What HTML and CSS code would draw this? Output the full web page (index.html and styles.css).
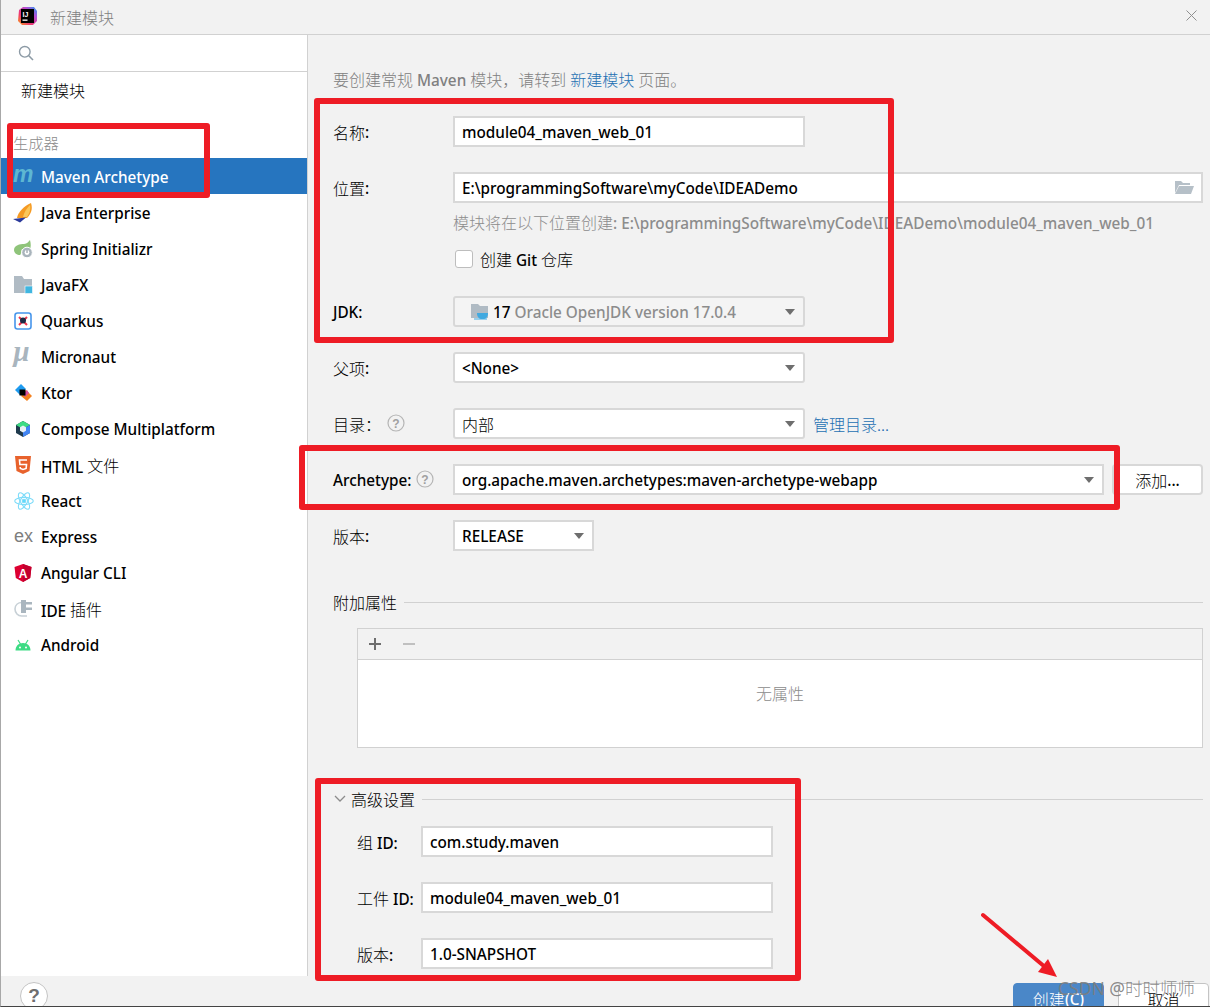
FILE: index.html
```html
<!DOCTYPE html>
<html lang="zh-CN">
<head>
<meta charset="utf-8">
<title>新建模块</title>
<link rel="stylesheet" href="styles.css">
</head>
<body>
<div class="window">
  <header class="titlebar">
    <svg class="logo" viewBox="0 0 20 20" width="20" height="20">
      <defs>
        <linearGradient id="lg" x1="0" y1="1" x2="1" y2="0">
          <stop offset="0" stop-color="#f7a01c"/><stop offset=".35" stop-color="#f0366f"/><stop offset=".7" stop-color="#b34fd8"/><stop offset="1" stop-color="#1e9ef0"/>
        </linearGradient>
      </defs>
      <path d="M2 4 6 1h11l3 4v10l-4 4H5l-4-4z" fill="url(#lg)"/>
      <rect x="4" y="3" width="13" height="14" fill="#000"/>
      <text x="5.5" y="10.5" class="logo-text">IJ</text>
      <rect x="5.5" y="13.5" width="5" height="1.3" fill="#fff"/>
    </svg>
    <span class="zh title-text">新建模块</span>
    <svg class="close" viewBox="0 0 11 11" width="11" height="11"><path d="M.5.5l10 10M10.5.5l-10 10" stroke="#8f8f8f" fill="none"/></svg>
  </header>

  <div class="body">
    <aside class="sidebar">
      <div class="search">
        <svg viewBox="0 0 16 16" width="16" height="16"><circle cx="6.8" cy="6.8" r="5.3" fill="none" stroke="#8c9aa5" stroke-width="1.4"/><path d="M10.8 10.8l4.2 4.2" stroke="#8c9aa5" stroke-width="1.6"/></svg>
      </div>
      <div class="plain-item zh">新建模块</div>
      <div class="group-title zh">生成器</div>
      <ul class="list">
        <li class="item selected">
          <svg class="ico" viewBox="0 0 18 18"><text x="-1" y="14" class="ico-maven">m</text></svg>
          <span>Maven Archetype</span>
        </li>
        <li class="item">
          <svg class="ico" viewBox="0 0 18 18"><path d="M3 14C4 8 10 2 17-1c2 6 0 11-4 15z" fill="#f59a23"/><path d="M9 13C10 8 13 4 16 1c1 5-1 9-3 12z" fill="#fbc75a"/><path d="M-1 15l13-1.500-6 5z" fill="#2b3a9b"/></svg>
          <span>Java Enterprise</span>
        </li>
        <li class="item">
          <svg class="ico" viewBox="0 0 18 18"><path d="M0 10c0-5 6-6 10-6 3 0 5-3 6-4 1 4 1 7 0 9H8c-1 3-1 6-2 6-3 0-6-2-6-5z" fill="#8fc47a"/><circle cx="13" cy="12.500" r="5.300" fill="#a9b4bc" stroke="#fff"/><circle cx="13" cy="12.500" r="2.400" fill="#fff"/><path d="M13 10v3" stroke="#7c8a94"/></svg>
          <span>Spring Initializr</span>
        </li>
        <li class="item">
          <svg class="ico" viewBox="0 0 18 18"><path d="M0 0h8l2 3h8v14H0z" fill="#b0bbc4"/><rect x="11" y="10" width="7.500" height="7.500" fill="#40b6e0" stroke="#fff" stroke-width=".6"/></svg>
          <span>JavaFX</span>
        </li>
        <li class="item">
          <svg class="ico" viewBox="0 0 18 18"><rect x="1" y="1" width="16" height="16" rx="2.500" fill="#fff" stroke="#4695eb" stroke-width="1.600"/><path d="M5 5l8 8M13 5l-8 8" stroke="#f0364f" stroke-width="2"/><circle cx="9" cy="8.500" r="3" fill="#1e2a44"/></svg>
          <span>Quarkus</span>
        </li>
        <li class="item">
          <svg class="ico" viewBox="0 0 18 18"><text x="-1" y="13" class="ico-micro">µ</text></svg>
          <span>Micronaut</span>
        </li>
        <li class="item">
          <svg class="ico" viewBox="0 0 18 18"><path d="M1 6l6-6 5 5-6 6z" fill="#1e9bf0"/><path d="M7 12l5-6 6 6-5 5z" fill="#f58220"/><path d="M9 10l4-4 2 3-4 4z" fill="#d84fa0"/><rect x="5.500" y="5.500" width="6" height="6" fill="#000"/></svg>
          <span>Ktor</span>
        </li>
        <li class="item">
          <svg class="ico" viewBox="0 0 18 18"><path d="M9 1l7 4v8l-7 4-7-4V5z" fill="#1f3a4d"/><path d="M9 1l7 4-7 4-7-4z" fill="#3ddc84"/><path d="M16 5v8l-7 4V9z" fill="#4285f4"/><path d="M9 5.500l3 1.800v3.400L9 12.500l-3-1.800V7.300z" fill="#e8f0f6"/></svg>
          <span>Compose Multiplatform</span>
        </li>
        <li class="item">
          <svg class="ico" viewBox="0 0 18 18"><path d="M1 0h16l-1.500 15L9 18l-6.500-3z" fill="#e8622c"/><path d="M13 4H5.500l.4 4.500h6.600l-.4 4L9 13.500l-2.600-1-.2-1.500" fill="none" stroke="#fff" stroke-width="1.600"/></svg>
          <span>HTML <span class="zh">文件</span></span>
        </li>
        <li class="item">
          <svg class="ico ico-wide" viewBox="0 0 20 18" fill="none" stroke="#7fdcf9" stroke-width="1.100"><ellipse cx="10" cy="9" rx="9.300" ry="3.600"/><ellipse cx="10" cy="9" rx="9.300" ry="3.600" transform="rotate(60 10 9)"/><ellipse cx="10" cy="9" rx="9.300" ry="3.600" transform="rotate(120 10 9)"/><circle cx="10" cy="9" r="1.800" fill="#61dafb"/></svg>
          <span>React</span>
        </li>
        <li class="item">
          <svg class="ico ico-wide" viewBox="0 0 20 18"><text x="0" y="14" class="ico-ex">ex</text></svg>
          <span>Express</span>
        </li>
        <li class="item">
          <svg class="ico" viewBox="0 0 18 18"><path d="M9 0l8.500 3-1.300 11L9 18l-7.200-4L.5 3z" fill="#dd0031"/><path d="M9 0l8.500 3-1.300 11L9 18z" fill="#c3002f"/><text x="9" y="13.500" class="ico-ng">A</text></svg>
          <span>Angular CLI</span>
        </li>
        <li class="item">
          <svg class="ico" viewBox="0 0 18 18"><path d="M8 2.500C4 2.500 1 5 1 9s3 7 6.500 7H13" fill="none" stroke="#c7d0d6" stroke-width="1.600"/><path d="M7 0h5v2h6v2.500h-6v3h6V10h-6v3H7z" fill="#aab6bf"/></svg>
          <span>IDE <span class="zh">插件</span></span>
        </li>
        <li class="item">
          <svg class="ico" viewBox="0 0 18 18"><path d="M1.500 14.500c0-4.500 3-7.500 7.500-7.500s7.500 3 7.500 7.500z" fill="#3ddc84"/><path d="M4 4l2.500 4M14 4l-2.500 4" stroke="#3ddc84" stroke-width="1.200"/><circle cx="6" cy="11.500" r="1" fill="#fff"/><circle cx="12" cy="11.500" r="1" fill="#fff"/></svg>
          <span>Android</span>
        </li>
      </ul>
    </aside>

    <main class="main">
      <p class="intro"><span class="zh">要创建常规</span> Maven <span class="zh">模块，请转到</span> <a class="link zh">新建模块</a> <span class="zh">页面。</span></p>

      <div class="row">
        <label class="label"><span class="zh">名称</span>:</label>
        <div class="field w-short">module04_maven_web_01</div>
      </div>
      <div class="row row-tight">
        <label class="label"><span class="zh">位置</span>:</label>
        <div class="field grow"><span>E:\programmingSoftware\myCode\IDEADemo</span><svg class="folder" viewBox="0 0 20 14" width="20" height="14"><path d="M1 13V1h6l2 2h7v2H5z" fill="#b6c0c8"/><path d="M5 6h15l-3 8H1z" fill="#b6c0c8"/></svg></div>
      </div>
      <div class="under">
        <p class="hint"><span class="zh">模块将在以下位置创建</span>: E:\programmingSoftware\myCode\IDEADemo\module04_maven_web_01</p>
        <div class="check"><span class="box"></span><span><span class="zh">创建</span> Git <span class="zh">仓库</span></span></div>
      </div>
      <div class="row">
        <label class="label">JDK:</label>
        <div class="field combo disabled w-short">
          <svg class="jdk" viewBox="0 0 20 18" width="20" height="18"><path d="M1 1h7l2 2h8v12H1z" fill="#b0bbc4"/><path d="M7 10h11c0 4-2 6-5 6h-1c-3 0-5-2-5-6z" fill="#40a9e0"/><path d="M4 16h13" stroke="#40a9e0"/></svg>
          <span class="jdk-num">17</span><span class="muted">Oracle OpenJDK version 17.0.4</span>
        </div>
      </div>
      <div class="row">
        <label class="label"><span class="zh">父项</span>:</label>
        <div class="field combo w-short">&lt;None&gt;</div>
      </div>
      <div class="row">
        <label class="label"><span class="zh">目录：</span><svg class="help help-dir" viewBox="0 0 18 18" width="18" height="18"><circle cx="9" cy="9" r="8" fill="none" stroke="#b5b5b5" stroke-width="1.200"/><text x="9" y="13.500" class="help-mark">?</text></svg></label>
        <div class="field combo w-short"><span class="zh">内部</span></div>
        <a class="link zh manage">管理目录...</a>
      </div>
      <div class="row">
        <label class="label">Archetype:<svg class="help help-arch" viewBox="0 0 18 18" width="18" height="18"><circle cx="9" cy="9" r="8" fill="none" stroke="#b5b5b5" stroke-width="1.200"/><text x="9" y="13.500" class="help-mark">?</text></svg></label>
        <div class="field select grow">org.apache.maven.archetypes:maven-archetype-webapp</div>
        <div class="add-btn"><span class="zh">添加</span>...</div>
      </div>
      <div class="row row-flush">
        <label class="label"><span class="zh">版本</span>:</label>
        <div class="field select w-version">RELEASE</div>
      </div>

      <div class="section section-extra"><span class="zh">附加属性</span></div>
      <div class="table">
        <div class="toolbar">
          <svg viewBox="0 0 14 14" width="14" height="14"><path d="M7 1v12M1 7h12" stroke="#6e6e6e" stroke-width="2"/></svg>
          <svg viewBox="0 0 14 14" width="14" height="14"><path d="M1 7h12" stroke="#c0c0c0" stroke-width="2"/></svg>
        </div>
        <div class="table-body zh">无属性</div>
      </div>

      <div class="section section-adv">
        <svg viewBox="0 0 12 8" width="12" height="8"><path d="M1 1l5 5 5-5" fill="none" stroke="#8c8c8c" stroke-width="1.300"/></svg>
        <span class="zh">高级设置</span>
      </div>
      <div class="adv">
        <div class="row">
          <label class="label-adv"><span class="zh">组</span> ID:</label>
          <div class="field w-adv">com.study.maven</div>
        </div>
        <div class="row">
          <label class="label-adv"><span class="zh">工件</span> ID:</label>
          <div class="field w-adv">module04_maven_web_01</div>
        </div>
        <div class="row row-flush">
          <label class="label-adv"><span class="zh">版本</span>:</label>
          <div class="field w-adv">1.0-SNAPSHOT</div>
        </div>
      </div>
    </main>
  </div>

  <footer class="footer">
    <div class="help-btn">?</div>
    <div class="actions">
      <div class="btn primary"><span class="zh">创建</span>(C)</div>
      <div class="btn"><span class="zh">取消</span></div>
    </div>
  </footer>

  <div class="mark mark-1"></div>
  <div class="mark mark-2"></div>
  <div class="mark mark-3"></div>
  <div class="mark mark-4"></div>
  <svg class="arrow" viewBox="0 0 90 75" width="90" height="75"><path d="M3 3l62 52" stroke="#ee1c25" stroke-width="4" stroke-linecap="round"/><path d="M77 65L58 60 68 47z" fill="#ee1c25"/></svg>
  <div class="watermark">CSDN @<span class="wm-zh">时时师师</span></div>
</div>
</body>
</html>
```

FILE: styles.css
```css
* { box-sizing: border-box; }
html, body { margin: 0; padding: 0; }
body {
  font-family: "Noto Sans", "Noto Sans CJK SC", sans-serif;
  font-size: 15.3px;
  font-weight: 500;
  color: #000;
  background: #f2f2f2;
}
p { margin: 0; }
ul { list-style: none; margin: 0; padding: 0; }

.zh {
  font-family: "Noto Sans CJK SC", "Noto Sans", sans-serif;
  font-weight: 300;
}

.window {
  position: relative;
  width: 1210px;
  height: 1007px;
  overflow: hidden;
  display: flex;
  flex-direction: column;
  border-left: 1px solid #a8a8a8;
  border-bottom: 1px solid #444;
}

/* title bar */
.titlebar {
  flex: none;
  height: 35px;
  display: flex;
  align-items: center;
  padding: 0 13px 0 16px;
  border-bottom: 1px solid #d1d1d1;
}
.logo { flex: none; margin-right: 13px; margin-top: -2px; }
.logo-text { font: 700 7px "Liberation Sans", sans-serif; fill: #fff; }
.title-text { color: #808080; font-size: 16px; }
.close { margin-left: auto; margin-top: -3px; }

.body { flex: 1; min-height: 0; display: flex; }

/* sidebar */
.sidebar {
  flex: none;
  width: 307px;
  background: #fff;
  border-right: 1px solid #d1d1d1;
}
.search {
  height: 37px;
  display: flex;
  align-items: center;
  padding-left: 17px;
  border-bottom: 1px solid #d1d1d1;
}
.plain-item {
  height: 36px;
  padding-left: 20px;
  display: flex;
  align-items: center;
  font-size: 16px;
}
.group-title {
  height: 28px;
  margin-top: 20px;
  margin-bottom: 2px;
  padding-left: 12px;
  display: flex;
  align-items: center;
  color: #8c8c8c;
}
.item {
  height: 36px;
  display: flex;
  align-items: center;
  padding: 1px 0 0 13px;
}
.item .zh { font-size: 16px; vertical-align: 1px; }
.selected { background: #2675bf; color: #fff; }
.ico { flex: none; width: 18px; height: 18px; margin-right: 9px; overflow: visible; }
.ico-wide { width: 20px; margin-right: 7px; }
.ico-maven { font: italic 700 23px "Liberation Sans", sans-serif; fill: #5db7d2; }
.ico-micro { font: italic 700 29px "Liberation Serif", serif; fill: #a9b5be; }
.ico-ex { font: 400 18px "Liberation Sans", sans-serif; fill: #7d7d7d; }
.ico-ng { font: 700 12px "Liberation Sans", sans-serif; fill: #fff; text-anchor: middle; }

/* main form */
.main {
  flex: 1;
  min-width: 0;
  padding: 0 7px 0 25px;
}
.intro {
  height: 24px;
  margin-top: 32px;
  margin-bottom: 25px;
  line-height: 24px;
  color: #808080;
}
.intro .zh { font-size: 16px; }
.link { color: #2470b3; }

.row {
  height: 31px;
  display: flex;
  align-items: center;
  margin-bottom: 25px;
}
.row-tight { margin-bottom: 7px; }
.row-flush { margin-bottom: 0; }
.label {
  flex: none;
  width: 120px;
  display: flex;
  align-items: center;
  padding-top: 1px;
}
.label .zh, .label-adv .zh { font-size: 16px; }
.label-adv {
  flex: none;
  width: 64px;
  white-space: nowrap;
}
.adv { padding-left: 24px; }

.field {
  position: relative;
  height: 31px;
  display: flex;
  align-items: center;
  padding: 1px 0 0 7px;
  background: #fff;
  border: 2px solid #d8d8d8;
  white-space: nowrap;
}
.field .zh { font-size: 16px; }
.grow { flex: 1; min-width: 0; }
.w-short { width: 352px; }
.w-version { width: 141px; }
.w-adv { width: 352px; }

.combo { border-radius: 3px; }
.combo::after, .select::after {
  content: "";
  position: absolute;
  right: 8px;
  top: 11px;
  border-left: 5.5px solid transparent;
  border-right: 5.5px solid transparent;
  border-top: 6px solid #6e6e6e;
}
.disabled { background: #f4f4f4; padding-left: 15px; }
.jdk { flex: none; margin-right: 3px; }
.jdk-num { margin-right: 4px; }
.muted { color: #8c8c8c; }
.folder { position: absolute; right: 7px; top: 6px; }
.help { flex: none; }
.help-dir { margin-left: 6px; margin-top: -3px; }
.help-arch { margin-left: 5px; margin-top: -3px; }
.help-mark { font: 700 12px "Liberation Sans", sans-serif; fill: #a0a0a0; text-anchor: middle; }
.manage { margin-left: 8px; font-size: 16px; }
.add-btn {
  flex: none;
  width: 91px;
  height: 31px;
  margin-left: 8px;
  display: flex;
  align-items: center;
  justify-content: center;
  background: #fff;
  border: 2px solid #d8d8d8;
  border-radius: 4px;
}
.add-btn .zh { font-size: 16px; }

.under { padding-left: 120px; margin-bottom: 25px; }
.hint { height: 24px; line-height: 24px; color: #8c8c8c; white-space: nowrap; }
.hint .zh { font-size: 16px; }
.check {
  height: 24px;
  margin-top: 13px;
  display: flex;
  align-items: center;
  gap: 7px;
}
.check .zh { font-size: 16px; }
.box {
  flex: none;
  width: 18px;
  height: 18px;
  margin-left: 2px;
  background: #fff;
  border: 1px solid #bdbdbd;
  border-radius: 3px;
}

.section {
  height: 24px;
  display: flex;
  align-items: center;
}
.section .zh { font-size: 16px; }
.section::after {
  content: "";
  flex: 1;
  height: 1px;
  margin-left: 7px;
  background: #d1d1d1;
}
.section-extra { margin-top: 39px; margin-bottom: 14px; }
.section-adv { margin-top: 39px; margin-bottom: 15px; }
.section-adv svg { flex: none; margin: 0 5px 0 1px; }

.table {
  height: 120px;
  margin-left: 24px;
  display: flex;
  flex-direction: column;
  border: 1px solid #d1d1d1;
}
.toolbar {
  flex: none;
  height: 31px;
  display: flex;
  align-items: center;
  gap: 20px;
  padding-left: 10px;
  border-bottom: 1px solid #d1d1d1;
}
.table-body {
  flex: 1;
  display: flex;
  align-items: center;
  justify-content: center;
  padding-bottom: 22px;
  background: #fff;
  color: #8c8c8c;
  font-size: 16px;
}

/* footer */
.footer {
  flex: none;
  height: 30px;
  display: flex;
  overflow: hidden;
  padding: 6px 1px 0 19px;
}
.help-btn {
  flex: none;
  width: 28px;
  height: 28px;
  display: flex;
  align-items: center;
  justify-content: center;
  background: #fff;
  border: 1px solid #c4c4c4;
  border-radius: 50%;
  color: #6e6e6e;
  font: 700 19px "Liberation Sans", sans-serif;
}
.actions {
  margin-left: auto;
  display: flex;
  gap: 14px;
  margin-top: 1px;
}
.btn {
  flex: none;
  width: 91px;
  height: 30px;
  display: flex;
  align-items: center;
  justify-content: center;
  background: #fff;
  border: 1px solid #c4c4c4;
  border-radius: 4px;
  padding-top: 2px;
}
.btn .zh { font-size: 16px; }
.primary { background: #4a87c8; border-color: #4a87c8; color: #fff; }

/* annotations drawn over the screenshot */
.mark {
  position: absolute;
  border: 6px solid #ee1c25;
  border-radius: 3px;
  pointer-events: none;
}
.mark-1 { left: 6px; top: 123px; width: 203px; height: 75px; }
.mark-2 { left: 313px; top: 98px; width: 580px; height: 245px; }
.mark-3 { left: 298px; top: 445px; width: 821px; height: 65px; }
.mark-4 { left: 314px; top: 778px; width: 486px; height: 203px; }
.arrow { position: absolute; left: 979px; top: 912px; overflow: visible; }
.watermark {
  position: absolute;
  left: 1057px;
  top: 975px;
  font-family: "Noto Sans", "Noto Sans CJK SC", sans-serif;
  font-size: 17.5px;
  font-weight: 400;
  color: rgba(125, 125, 125, 0.9);
  white-space: nowrap;
}
.wm-zh { font-family: "Noto Sans CJK SC", sans-serif; font-weight: 300; }
```
